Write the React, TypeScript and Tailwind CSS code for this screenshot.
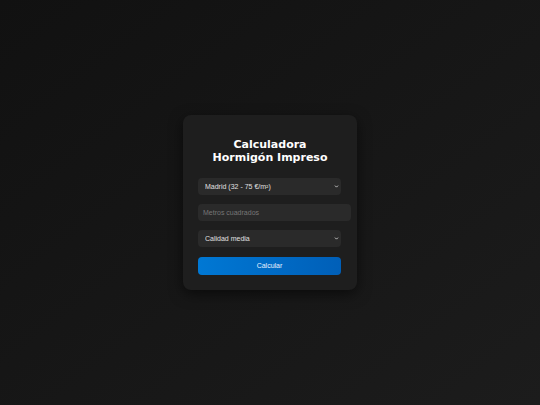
import { ChevronDown } from "lucide-react";

const Select = ({ value, options }: { value: string; options: string[] }) => {
  return (
    <div className="relative w-[143px] h-[17px]">
      <select
        defaultValue={value}
        className="block appearance-none w-full h-[17px] rounded-[4px] bg-[#2a2a2a] pl-[7px] pr-4 text-[7px] leading-[17px] text-[#e0e0e0] outline-none"
      >
        {options.map((o) => (
          <option key={o}>{o}</option>
        ))}
      </select>
      <ChevronDown
        className="absolute right-[2px] top-[6px] size-[5px] text-[#e0e0e0] pointer-events-none"
        strokeWidth={4}
      />
    </div>
  );
};

export default function App() {
  return (
    <div
      className="min-h-[405px] w-full flex items-center justify-center bg-gradient-to-br from-[#111111] to-[#1c1c1c]"
      style={{ fontFamily: '"Liberation Sans", Arial, sans-serif' }}
    >
      <div className="w-[174px] rounded-[8px] bg-[#1e1e1e] px-[15px] pt-[23px] pb-[15px] shadow-[0_4px_14px_rgba(0,0,0,0.55)]">
        <h2
          className="text-center text-[11px] leading-[13px] font-bold text-white"
          style={{ fontFamily: '"DejaVu Sans", Verdana, sans-serif' }}
        >
          Calculadora
          <br />
          Hormigón Impreso
        </h2>
        <div className="mt-[14px] flex flex-col">
          <Select
            value="Madrid (32 - 75 €/m²)"
            options={["Madrid (32 - 75 €/m²)", "Barcelona (35 - 80 €/m²)"]}
          />
          <input
            placeholder="Metros cuadrados"
            className="block mt-[9px] w-[153px] h-[17px] rounded-[4px] bg-[#2a2a2a] px-[5px] text-[7px] text-[#e0e0e0] placeholder:text-[#777777] outline-none"
          />
          <div className="mt-[9px]">
            <Select
              value="Calidad media"
              options={["Calidad básica", "Calidad media", "Calidad alta"]}
            />
          </div>
          <button className="block mt-[10px] w-[143px] h-[18px] rounded-[4px] bg-gradient-to-r from-[#0078d4] to-[#005fb8] text-[7px] text-[#e8f2ff]">
            Calcular
          </button>
        </div>
      </div>
    </div>
  );
}
